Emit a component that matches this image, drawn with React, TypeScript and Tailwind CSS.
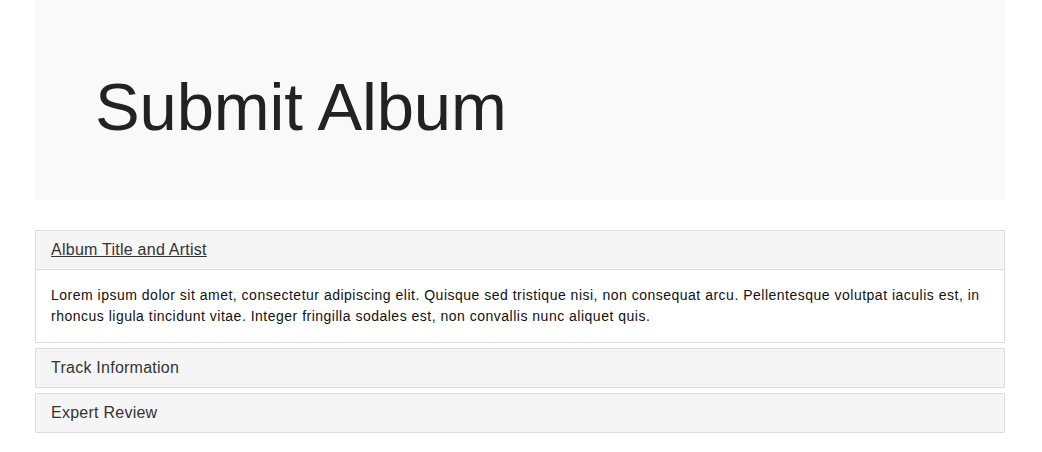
import React from "react"

const sections = [
  {
    title: "Album Title and Artist",
    open: true,
    body:
      "Lorem ipsum dolor sit amet, consectetur adipiscing elit. Quisque sed tristique nisi, non consequat arcu. Pellentesque volutpat iaculis est, in rhoncus ligula tincidunt vitae. Integer fringilla sodales est, non convallis nunc aliquet quis.",
  },
  { title: "Track Information", open: false, body: "" },
  { title: "Expert Review", open: false, body: "" },
]

export default function App() {
  return (
    <div
      className="min-h-[452px] bg-white"
      style={{ fontFamily: '"Liberation Sans", Arial, sans-serif' }}
    >
      <div className="ml-[35px] w-[970px]">
        <div className="h-[200px] bg-[#f9f9f9] px-[60px] pt-[69px]">
          <h1 className="text-[67px] leading-[76px] font-normal tracking-[-0.15px] text-[#222]">
            Submit Album
          </h1>
        </div>

        <div className="mt-[30px] flex flex-col gap-[5px]">
          {sections.map((s) => (
            <div key={s.title} className="border border-[#ddd] bg-white">
              <div className="bg-[#f5f5f5] px-[15px] py-[10px] text-[16px] leading-[18px] tracking-[0.25px] text-[#333]">
                <a href="#" className={s.open ? "underline" : ""}>
                  {s.title}
                </a>
              </div>
              {s.open && (
                <div className="border-t border-[#ddd] p-[15px] text-[14px] leading-[21px] tracking-[0.5px] text-[#111]">
                  {s.body}
                </div>
              )}
            </div>
          ))}
        </div>
      </div>
    </div>
  )
}
